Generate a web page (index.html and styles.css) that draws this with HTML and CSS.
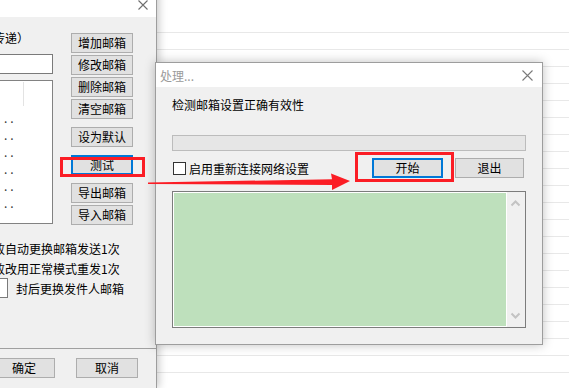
FILE: index.html
```html
<!DOCTYPE html>
<html lang="zh-CN">

<head>
    <meta charset="UTF-8">
    <meta name="viewport" content="width=device-width, initial-scale=1.0">
    <title>处理...</title>
    <link rel="stylesheet" href="styles.css">
</head>

<body>
    <!-- janela de trás: lista de contas -->
    <div class="window accounts">
        <div class="title-bar">
            <svg class="close" width="10" height="10" viewBox="0 0 10 10">
                <path d="M0.5 0.5 L9.5 9.5 M9.5 0.5 L0.5 9.5" stroke="#6e6e6e" stroke-width="1.1" fill="none" />
            </svg>
        </div>
        <div class="accounts-body">
            <div class="top-row">
                <div class="list-column">
                    <div class="caption">（轮流传递）</div>
                    <div class="text-input"></div>
                    <div class="list-box">
                        <div class="list-header"><span class="first-col"></span></div>
                        <div class="list-row">..</div>
                        <div class="list-row">..</div>
                        <div class="list-row">..</div>
                        <div class="list-row">..</div>
                        <div class="list-row">..</div>
                        <div class="list-row">..</div>
                    </div>
                </div>
                <div class="button-column">
                    <button class="btn">增加邮箱</button>
                    <button class="btn">修改邮箱</button>
                    <button class="btn">删除邮箱</button>
                    <button class="btn">清空邮箱</button>
                    <button class="btn spaced">设为默认</button>
                    <button class="btn spaced default">测试</button>
                    <button class="btn spaced">导出邮箱</button>
                    <button class="btn">导入邮箱</button>
                </div>
            </div>
            <div class="options">
                <div class="option"><span class="check"></span>失败自动更换邮箱发送1次</div>
                <div class="option"><span class="check"></span>失败改用正常模式重发1次</div>
                <div class="option"><span class="check"></span><span class="number-input"></span>封后更换发件人邮箱</div>
            </div>
        </div>
        <div class="accounts-footer">
            <button class="btn">确定</button>
            <button class="btn">取消</button>
        </div>
    </div>

    <!-- janela da frente: teste -->
    <div class="window processing">
        <div class="title-bar">
            <span class="title">处理...</span>
            <svg class="close" width="11" height="11" viewBox="0 0 11 11">
                <path d="M0.5 0.5 L10.5 10.5 M10.5 0.5 L0.5 10.5" stroke="#7a7a7a" stroke-width="1.1" fill="none" />
            </svg>
        </div>
        <div class="processing-body">
            <p class="message">检测邮箱设置正确有效性</p>
            <div class="progress"></div>
            <div class="action-row">
                <label class="reconnect"><span class="check"></span>启用重新连接网络设置</label>
                <div class="actions">
                    <button class="btn default start">开始</button>
                    <button class="btn quit">退出</button>
                </div>
            </div>
            <div class="log">
                <div class="log-text"></div>
                <div class="scrollbar">
                    <svg width="17" height="17" viewBox="0 0 17 17">
                        <path d="M4.5 10.5 L8.5 6.5 L12.5 10.5" stroke="#c3c3c3" stroke-width="2" fill="none" />
                    </svg>
                    <svg width="17" height="17" viewBox="0 0 17 17">
                        <path d="M4.5 6.5 L8.5 10.5 L12.5 6.5" stroke="#c3c3c3" stroke-width="2" fill="none" />
                    </svg>
                </div>
            </div>
        </div>
    </div>

    <!-- marcações vermelhas por cima -->
    <svg class="marks" width="569" height="388" viewBox="0 0 569 388">
        <rect x="61.5" y="158.5" width="82" height="17" fill="none" stroke="#fb1d25" stroke-width="3" />
        <rect x="356.5" y="153.5" width="96" height="27" fill="none" stroke="#fb1d25" stroke-width="3" />
        <polygon points="148,182.6 332,179.2 331,173.5 350,181 332,190 332,185 148,184" fill="#fb1d25" />
    </svg>
</body>

</html>
```

FILE: styles.css
```css
body {
    margin: 0;
    width: 569px;
    height: 388px;
    position: relative;
    overflow: hidden;
    font-family: "Noto Sans CJK SC", "Noto Sans", sans-serif;
    font-size: 12px;
    color: #000;
    background:
        linear-gradient(#fff, #fff) 0 0 / 100% 32px no-repeat,
        repeating-linear-gradient(#e8e8e8 0 1px, #fff 1px 17px) 0 32px / 100% 17px;
}

.window {
    position: absolute;
    box-sizing: border-box;
    border: 1px solid #9d9d9d;
    background: #f0f0f0;
    display: flex;
    flex-direction: column;
}

.title-bar {
    height: 24px;
    background: #fff;
    display: flex;
    align-items: center;
    flex-shrink: 0;
}

.close {
    margin-left: auto;
}

.btn {
    box-sizing: border-box;
    width: 62px;
    height: 20px;
    padding: 0;
    border: 1px solid #adadad;
    background: #e1e1e1;
    color: #000;
    font: inherit;
    line-height: 18px;
}

.btn.default {
    border: 2px solid #0078d7;
    line-height: 16px;
}

.check {
    box-sizing: border-box;
    width: 13px;
    height: 13px;
    border: 1px solid #333;
    background: #fff;
    flex-shrink: 0;
}

/* janela de contas */

.accounts {
    left: -60px;
    top: -8px;
    width: 217px;
    height: 396px;
    border-bottom: 0;
    box-shadow: 2px 0 8px rgba(0, 0, 0, 0.22);
}

.accounts .title-bar {
    padding-right: 8px;
}

.accounts-body {
    padding: 13px 23px 0 19px;
}

.top-row {
    display: flex;
    align-items: flex-start;
    gap: 18px;
}

.list-column {
    width: 93px;
    display: flex;
    flex-direction: column;
}

.caption {
    height: 16px;
    line-height: 16px;
    margin-left: -3px;
    white-space: nowrap;
}

.text-input {
    box-sizing: border-box;
    height: 20px;
    margin-top: 8px;
    border: 1px solid #7a7a7a;
    background: #fff;
}

.list-box {
    box-sizing: border-box;
    height: 144px;
    margin-top: 6px;
    border: 1px solid #828282;
    background: #fff;
    padding-top: 1px;
}

.list-header {
    height: 24px;
    margin-bottom: 3px;
}

.first-col {
    display: block;
    width: 62px;
    height: 24px;
    border-right: 1px solid #e3e3e3;
}

.list-row {
    height: 17px;
    line-height: 17px;
    padding-left: 43px;
    letter-spacing: 3px;
    color: #333;
}

.button-column {
    display: flex;
    flex-direction: column;
    gap: 2px;
    margin-top: 3px;
}

.button-column .spaced {
    margin-top: 6px;
}

.options {
    margin-top: 13px;
}

.option {
    height: 20px;
    display: flex;
    align-items: center;
    gap: 8px;
    white-space: nowrap;
}

.number-input {
    box-sizing: border-box;
    width: 27px;
    height: 20px;
    border: 1px solid #7a7a7a;
    background: #fff;
}

.accounts-footer {
    margin-top: 50px;
    border-top: 1px solid #a0a0a0;
    padding: 9px 0 0 52px;
    display: flex;
    gap: 21px;
}

/* janela de processamento */

.processing {
    left: 155px;
    top: 62px;
    width: 388px;
    height: 283px;
    box-shadow: 0 0 10px rgba(0, 0, 0, 0.25);
}

.processing .title-bar {
    padding: 0 9px 0 4px;
}

.title {
    color: #9a9a9a;
}

.processing-body {
    padding: 10px 16px 0 16px;
}

.message {
    margin: 0;
    height: 16px;
    line-height: 16px;
}

.progress {
    box-sizing: border-box;
    height: 16px;
    margin-top: 22px;
    border: 1px solid #bcbcbc;
    background: #e6e6e6;
}

.action-row {
    height: 20px;
    margin-top: 7px;
    display: flex;
    align-items: center;
}

.reconnect {
    display: flex;
    align-items: center;
    gap: 3px;
    margin-left: 1px;
}

.actions {
    margin-left: auto;
    margin-right: 2px;
    display: flex;
    gap: 12px;
}

.start {
    width: 71px;
}

.quit {
    width: 69px;
}

.log {
    box-sizing: border-box;
    height: 137px;
    margin-top: 13px;
    border: 1px solid #7c7c7c;
    display: flex;
}

.log-text {
    flex: 1;
    background: #bee0bc;
    border: 1px solid #fff;
}

.scrollbar {
    width: 18px;
    background: #f0f0f0;
    display: flex;
    flex-direction: column;
    justify-content: space-between;
    padding: 3px 0;
}

.marks {
    position: absolute;
    left: 0;
    top: 0;
    pointer-events: none;
}
```
